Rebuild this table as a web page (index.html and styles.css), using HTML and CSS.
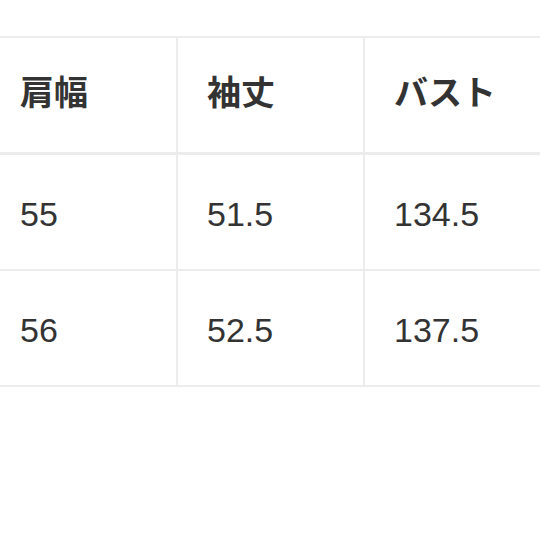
FILE: index.html
```html
<!DOCTYPE html>
<html lang="ja">
<head>
<meta charset="utf-8">
<link rel="stylesheet" href="styles.css">
</head>
<body>
<div class="table">
  <div class="row head">
    <div class="cell">肩幅</div>
    <div class="cell">袖丈</div>
    <div class="cell">バスト</div>
  </div>
  <div class="row">
    <div class="cell">55</div>
    <div class="cell">51.5</div>
    <div class="cell">134.5</div>
  </div>
  <div class="row">
    <div class="cell">56</div>
    <div class="cell">52.5</div>
    <div class="cell">137.5</div>
  </div>
</div>
</body>
</html>
```
FILE: styles.css
```css
html, body {
  margin: 0;
  padding: 0;
  background: #ffffff;
  overflow: hidden;
}
body {
  font-family: "Liberation Sans", "Noto Sans CJK JP", sans-serif;
  color: #333333;
}
.table {
  margin-top: 36px;
  margin-left: -9px;
  width: max-content;
  border-top: 2px solid #ececec;
}
.row {
  display: flex;
  border-bottom: 2px solid #ececec;
}
.row.head {
  border-bottom-width: 3px;
}
.cell {
  box-sizing: border-box;
  width: 187px;
  height: 114px;
  padding-left: 29px;
  padding-top: 4px;
  border-right: 2px solid #ececec;
  display: flex;
  align-items: center;
  font-size: 34px;
}
.head .cell {
  font-weight: bold;
  font-size: 34px;
  padding-top: 0;
  padding-bottom: 9px;
}
```
